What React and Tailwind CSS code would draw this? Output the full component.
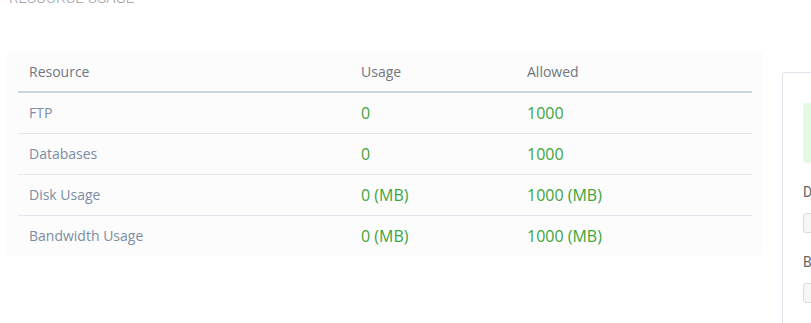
import React from 'react';

const ROWS = [
  { name: 'FTP', usage: '0', allowed: '1000' },
  { name: 'Databases', usage: '0', allowed: '1000' },
  { name: 'Disk Usage', usage: '0 (MB)', allowed: '1000 (MB)' },
  { name: 'Bandwidth Usage', usage: '0 (MB)', allowed: '1000 (MB)' },
];

export default function App() {
  return (
    <div className="w-[811px] h-[323px] overflow-hidden bg-white flex" style={{ fontFamily: '"Open Sans", sans-serif' }}>
      {/* Left column */}
      <div className="w-[776px] shrink-0">
        <h3 className="mt-[-12px] pl-[9px] text-[15px] leading-[20px] font-light text-[#9a9a9a]" style={{ fontFamily: 'Roboto, sans-serif' }}>
          RESOURCE USAGE
        </h3>
        <div className="ml-[6px] mt-[44px] w-[757px] bg-[#fcfcfd] rounded-[3px] px-[12px]">
          <table className="w-[734px] border-collapse text-left">
            <thead>
              <tr className="h-[40px] border-b-2 border-[#cfd6df]">
                <th className="w-[331px] pl-[11px] font-normal text-[14px] text-[#6f7782]">Resource</th>
                <th className="w-[166px] pl-[12px] font-normal text-[14px] text-[#6f7782]">Usage</th>
                <th className="pl-[12px] font-normal text-[14px] text-[#6f7782]">Allowed</th>
              </tr>
            </thead>
            <tbody>
              {ROWS.map((r, i) => (
                <tr key={r.name} className={`h-[41px] ${i < ROWS.length - 1 ? 'border-b border-[#e1e7ee]' : ''}`}>
                  <td className="pl-[11px] text-[14px] text-[#7d8ca3]">{r.name}</td>
                  <td className="pl-[12px] text-[16px] text-[#3ea53a]">{r.usage}</td>
                  <td className="pl-[12px] text-[16px] text-[#3ea53a]">{r.allowed}</td>
                </tr>
              ))}
            </tbody>
          </table>
        </div>
      </div>

      {/* Right panel (cut off) */}
      <div className="mt-[72px] ml-[6px] flex-1 border-l border-t border-[#dde3ea] rounded-tl-[4px] pl-[20px] pt-[30px]">
        <div className="h-[60px] bg-[#e4fbe3] rounded-l-[3px]" />
        <div className="mt-[20px] text-[14px] leading-[18px] text-[#666]" style={{ fontFamily: 'Roboto, sans-serif' }}>Domain</div>
        <div className="mt-[12px] h-[20px] rounded-l-[3px] border border-[#dcdcdc] bg-[#f6f6f6]" />
        <div className="mt-[20px] text-[14px] leading-[18px] text-[#666]" style={{ fontFamily: 'Roboto, sans-serif' }}>Bandwidth</div>
        <div className="mt-[12px] h-[20px] rounded-l-[3px] border border-[#dcdcdc] bg-[#f6f6f6]" />
      </div>
    </div>
  );
}
